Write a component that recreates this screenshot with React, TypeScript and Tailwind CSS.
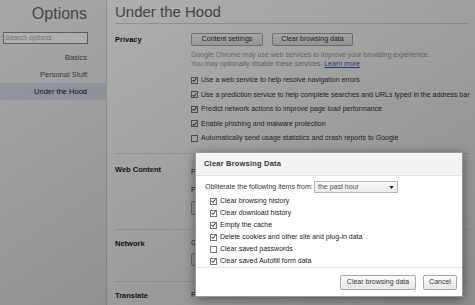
import React from "react";

const font = { fontFamily: '"Liberation Sans", Arial, sans-serif' };

function Check({ on }: { on: boolean }) {
  return (
    <span className="inline-flex w-[7px] h-[7px] border border-[#777] bg-white items-center justify-center shrink-0">
      {on && (
        <svg viewBox="0 0 8 8" className="w-[6px] h-[6px]">
          <path d="M1 4 L3 6.5 L7 1" fill="none" stroke="#222" strokeWidth="1.6" />
        </svg>
      )}
    </span>
  );
}

function Btn({ children, className = "" }: { children: React.ReactNode; className?: string }) {
  return (
    <span
      className={`inline-flex items-center justify-center border border-[#a9a9a9] rounded-[2px] bg-gradient-to-b from-[#fdfdfd] to-[#e6e6e6] text-[7px] text-[#333] whitespace-nowrap ${className}`}
    >
      {children}
    </span>
  );
}

const privacyItems = [
  { on: true, label: "Use a web service to help resolve navigation errors" },
  { on: true, label: "Use a prediction service to help complete searches and URLs typed in the address bar" },
  { on: true, label: "Predict network actions to improve page load performance" },
  { on: true, label: "Enable phishing and malware protection" },
  { on: false, label: "Automatically send usage statistics and crash reports to Google" },
];

const clearItems = [
  { on: true, label: "Clear browsing history" },
  { on: true, label: "Clear download history" },
  { on: true, label: "Empty the cache" },
  { on: true, label: "Delete cookies and other site and plug-in data" },
  { on: false, label: "Clear saved passwords" },
  { on: true, label: "Clear saved Autofill form data" },
];

export default function App() {
  return (
    <div className="relative w-[475px] h-[305px] overflow-hidden bg-white" style={font}>
      <div className="flex h-full">
        {/* sidebar */}
        <div className="w-[107px] shrink-0 bg-[#efefef] border-r border-[#d4d4d4] flex flex-col">
          <div className="text-right pr-[19px] pt-[4px] text-[16px] leading-[20px] text-[#666]">Options</div>
          <div className="mt-[8px] ml-[3px] w-[85px] h-[12px] border border-[#888] bg-white text-[7px] leading-[10px] text-[#aaa] pl-[1px]">
            Search options
          </div>
          <div className="mt-[5px] text-right pr-[19px] text-[7.5px] leading-[17px] text-[#555]">Basics</div>
          <div className="text-right pr-[19px] text-[7.5px] leading-[17px] text-[#555]">Personal Stuff</div>
          <div className="text-right pr-[19px] text-[7.5px] leading-[17px] text-[#222] bg-[#d6dce8]">Under the Hood</div>
        </div>

        {/* main */}
        <div className="flex-1 pl-[8px] pr-[6px]">
          <div className="text-[15px] leading-[20px] pt-[2px] text-[#666] border-b border-[#d8d8d8] pb-[1px]">Under the Hood</div>

          <div className="flex pt-[9px] pb-[7px]">
            <div className="w-[76px] shrink-0 text-[7.5px] font-bold text-[#222] pt-[1px]">Privacy</div>
            <div className="flex-1">
              <div className="flex gap-[9px]">
                <Btn className="w-[72px] h-[13px]">Content settings</Btn>
                <Btn className="w-[81px] h-[13px]">Clear browsing data</Btn>
              </div>
              <div className="mt-[5px] text-[7px] leading-[8.5px] text-[#999]">
                Google Chrome may use web services to improve your browsing experience.
                <br />
                You may optionally disable these services. <span className="text-[#3355aa] underline">Learn more</span>
              </div>
              <div className="mt-[5px] flex flex-col">
                {privacyItems.map((it) => (
                  <div key={it.label} className="flex items-center gap-[3px] h-[14.5px] text-[7px] text-[#333] whitespace-nowrap">
                    <Check on={it.on} />
                    <span>{it.label}</span>
                  </div>
                ))}
              </div>
            </div>
          </div>

          <div className="flex border-t border-[#e4e4e4] pt-[10px] h-[76px]">
            <div className="w-[76px] shrink-0 text-[7.5px] font-bold text-[#222]">Web Content</div>
            <div className="w-[6px] overflow-hidden whitespace-nowrap text-[7px] text-[#333]">
              <div className="mt-[3px]">F</div>
              <div className="mt-[8px]">P</div>
              <div className="mt-[5px] w-[20px] h-[14px] border border-[#a9a9a9] rounded-[2px] bg-[#efefef]" />
            </div>
          </div>

          <div className="flex border-t border-[#e4e4e4] pt-[8px] h-[52px]">
            <div className="w-[76px] shrink-0 text-[7.5px] font-bold text-[#222]">Network</div>
            <div className="w-[6px] overflow-hidden whitespace-nowrap text-[7px] text-[#333]">
              <div>G</div>
              <div className="mt-[5px] w-[20px] h-[13px] border border-[#a9a9a9] rounded-[2px] bg-[#efefef]" />
            </div>
          </div>

          <div className="flex border-t border-[#e4e4e4] pt-[8px]">
            <div className="w-[76px] shrink-0 text-[7.5px] font-bold text-[#222]">Translate</div>
            <div className="w-[6px] overflow-hidden whitespace-nowrap text-[7px] text-[#333]">R</div>
          </div>
        </div>
      </div>

      {/* overlay */}
      <div className="absolute inset-0 bg-gradient-to-br from-black/30 to-black/45" />

      {/* dialog */}
      <div className="absolute left-[195px] top-[152px] w-[268px] h-[145px] bg-white border border-[#9a9a9a] shadow-[0_2px_10px_rgba(0,0,0,0.45)] flex flex-col">
        <div className="h-[23px] bg-[#f3f3f3] border-b border-[#e2e2e2] flex items-center pl-[8px] text-[7.5px] font-bold text-[#333] tracking-[0.2px]">
          Clear Browsing Data
        </div>
        <div className="flex-1 pl-[9px] pr-[8px]">
          <div className="flex items-center mt-[5px] h-[12px] text-[7px] text-[#333]">
            <span className="w-[109px] whitespace-nowrap">Obliterate the following items from:</span>
            <span className="w-[84px] h-[12px] border border-[#b5b5b5] bg-gradient-to-b from-[#fafafa] to-[#e9e9e9] flex items-center justify-between px-[3px] text-[#555]">
              the past hour
              <svg viewBox="0 0 6 4" className="w-[5px] h-[3px]">
                <path d="M0 0 H6 L3 4 Z" fill="#222" />
              </svg>
            </span>
          </div>
          <div className="mt-[2px] pl-[5px] flex flex-col">
            {clearItems.map((it) => (
              <div key={it.label} className="flex items-center gap-[3px] h-[12px] text-[7px] text-[#222] whitespace-nowrap">
                <Check on={it.on} />
                <span>{it.label}</span>
              </div>
            ))}
          </div>
        </div>
        <div className="h-[29px] border-t border-[#e4e4e4] flex items-center justify-end gap-[7px] pr-[5px]">
          <Btn className="w-[76px] h-[15px]">Clear browsing data</Btn>
          <Btn className="w-[34px] h-[15px]">Cancel</Btn>
        </div>
      </div>
    </div>
  );
}
